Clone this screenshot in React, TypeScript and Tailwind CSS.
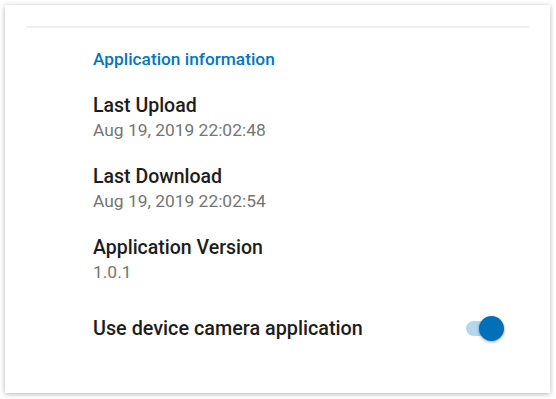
const rows = [
  { label: "Last Upload", value: "Aug 19, 2019 22:02:48" },
  { label: "Last Download", value: "Aug 19, 2019 22:02:54" },
  { label: "Application Version", value: "1.0.1" },
];

const App = () => {
  return (
    <div className="w-[556px] h-[399px] bg-white p-[5px] font-['Roboto',sans-serif]">
      <div className="h-[388px] w-[545px] bg-white shadow-[0_1px_5px_rgba(0,0,0,0.3)]">
        <div className="px-[21px] pt-[21px]">
          <div className="h-[2px] bg-[#f0f0f0]" />
        </div>
        <section className="pl-[88px] pr-[46px] pt-[19px]">
          <h2 className="text-[17.3px] leading-[24px] font-medium text-[#0277bd]">
            Application information
          </h2>
          {rows.map((row, i) => (
            <div key={row.label} className={i === 0 ? "mt-[22px]" : "mt-[21px]"}>
              <div className="text-[19.5px] leading-[25px] font-medium text-[#1d1d1d]">
                {row.label}
              </div>
              <div className="text-[17.4px] leading-[25px] text-[#757575]">
                {row.value}
              </div>
            </div>
          ))}
          <div className="mt-[31px] flex items-center justify-between">
            <span className="text-[19.8px] leading-[25px] font-medium text-[#1d1d1d]">
              Use device camera application
            </span>
            <div className="relative h-[25px] w-[38px]">
              <div className="absolute left-0 top-[5px] h-[15px] w-[33px] rounded-full bg-[#b3d7ee]" />
              <div className="absolute right-0 top-0 h-[25px] w-[25px] rounded-full bg-[#0270b8] shadow-[0_1px_3px_rgba(0,0,0,0.4)]" />
            </div>
          </div>
        </section>
      </div>
    </div>
  );
};

export default App;
